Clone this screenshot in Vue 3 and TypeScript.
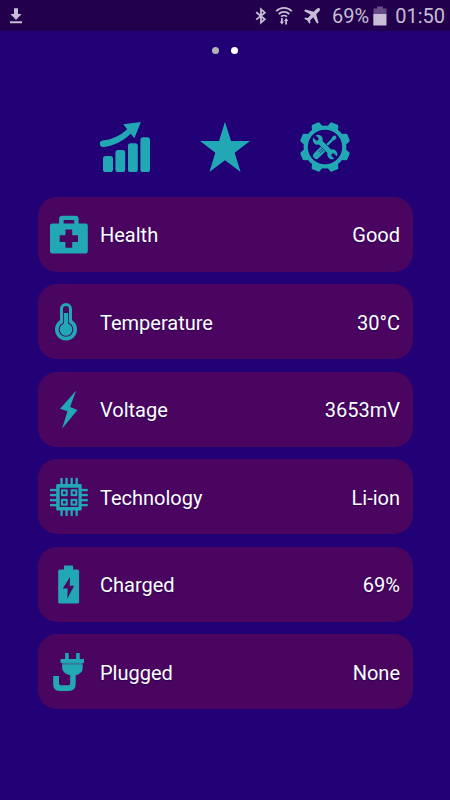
<script setup lang="ts">
interface Row {
  icon: 'health' | 'temperature' | 'voltage' | 'technology' | 'charged' | 'plugged'
  label: string
  value: string
}

const rows: Row[] = [
  { icon: 'health', label: 'Health', value: 'Good' },
  { icon: 'temperature', label: 'Temperature', value: '30°C' },
  { icon: 'voltage', label: 'Voltage', value: '3653mV' },
  { icon: 'technology', label: 'Technology', value: 'Li-ion' },
  { icon: 'charged', label: 'Charged', value: '69%' },
  { icon: 'plugged', label: 'Plugged', value: 'None' },
]

const toothAngles: number[] = [22.5, 67.5, 112.5, 157.5, 202.5, 247.5, 292.5, 337.5]
const pinOffsets: number[] = [10.4, 15.4, 20.5, 25.5]
const cells: [number, number][] = [[11, 11.4], [20.6, 11.4], [11, 20.9], [20.6, 20.9]]
</script>

<template>
  <div class="screen">
    <header class="status">
      <svg class="download" width="14" height="18" viewBox="0 0 14 18">
        <path d="M5 1.3h4v5.7h3.6L7 13 1.4 7H5zM1 14.3h12v2H1z" />
      </svg>
      <div class="tray">
        <svg class="bluetooth" width="12" height="18" viewBox="0 0 12 18">
          <path class="line" d="M1.2 5.2l8.6 7L6 15.6V2.2l3.8 3.4-8.6 7" />
        </svg>
        <svg class="wifi" width="18" height="20" viewBox="0 0 18 20">
          <path class="line" d="M1.2 5.1a11 11 0 0 1 15.6 0M3.7 8a7.5 7.5 0 0 1 10.600 0M6.100 10.700a4.200 4.200 0 0 1 5.800 0" />
          <path d="M6 12h1.800v3.400h1.300L6.900 18.600l-2.300-3.200H6zM10.200 18.600v-3.500H8.900l2.200-3.100 2.300 3.100H12v3.500z" />
        </svg>
        <svg class="plane" width="16" height="16" viewBox="0 0 16 16">
          <path d="M15.6.4c-.8-.8-2.200-.3-3.100.6L9.700 3.800 1.400 1.500 0 2.900l6.800 3.800-3 3.200-2.500-.3-1.100 1.100 3.200 1.900 1.900 3.200 1.100-1.100-.3-2.500 3.200-3 3.800 6.600 1.400-1.400-2.300-8.100 2.800-2.800c.9-.9 1.400-2.300.6-3.100z" />
        </svg>
        <span class="percent">69%</span>
        <svg class="cell" width="14" height="20" viewBox="0 0 14 20">
          <path class="dim" d="M4 .5h6v2h3.500V8H.5V2.500H4z" />
          <path d="M.3 8h13.200v11.500H.3z" />
        </svg>
        <span class="clock">01:50</span>
      </div>
    </header>

    <div class="pager">
      <i class="dot"></i>
      <i class="dot active"></i>
    </div>

    <nav class="tabs">
      <svg class="tab" viewBox="0 0 50 50">
        <rect x="3" y="34" width="10" height="16" rx="2.6" />
        <rect x="15.400" y="28" width="9.800" height="22" rx="2.600" />
        <rect x="28" y="21.300" width="9.800" height="28.700" rx="2.600" />
        <rect x="40.400" y="15.200" width="9.600" height="34.800" rx="2.600" />
        <path d="M2.600 18.500C11.500 17.700 20 13.800 27.200 7.200L23.300 2.200 40.800 0 34.400 16.200 30.800 11.700C23.500 18.600 13.500 24.200 3.700 25A3.270 3.270 0 0 1 2.600 18.500z" />
      </svg>
      <svg class="tab" viewBox="0 0 50 50">
        <path d="M25 -.3l6 19.300h19L34.700 30.700 40.600 50 25 38.300 9.400 50l5.900-19.300L0 19h19z" />
      </svg>
      <svg class="tab" viewBox="0 0 50 50">
        <circle class="ring" cx="25" cy="25" r="19.300" />
        <path
          v-for="angle in toothAngles"
          :key="angle"
          d="M18.800 6.200L20.700 .6Q21 -.4 22 -.4h6q1 0 1.300 1l1.900 5.600z"
          :transform="`rotate(${angle} 25 25)`"
        />
        <g transform="rotate(45 25 25)">
          <path d="M23.700 9.800h2.600l.7 2.800-.8 2v8h-2.400v-8l-.8-2zM21.700 28.300q0-1.800 1.600-1.800h3.400q1.600 0 1.600 1.800v8.900a3.300 3.300 0 0 1-6.600 0z" />
          <path class="groove" d="M24 28v5M26 28v5" />
        </g>
        <g transform="rotate(-45 25 25)">
          <path
            class="wrench"
            d="M23.300 10v4.400l1.700 1 1.700-1V10a5 5 0 0 1 .9 9v12a5 5 0 0 1-.9 9v-4.400l-1.700-1-1.700 1V40a5 5 0 0 1-.9-9V19a5 5 0 0 1 .9-9z"
          />
        </g>
      </svg>
    </nav>

    <main class="list">
      <section v-for="row in rows" :key="row.label" class="card">
        <svg class="icon" viewBox="0 0 37.5 37.5">
          <g v-if="row.icon === 'health'">
            <path
              fill-rule="evenodd"
              d="M9.100 7.500V3Q9.100 -.3 12.400 -.3H25.300Q28.600 -.3 28.600 3V7.500H35.500Q37.800 7.500 37.800 9.800V35.200Q37.800 37.500 35.500 37.500H2.300Q0 37.500 0 35.200V9.800Q0 7.500 2.300 7.500zM13.600 7.500H24.300V4.800Q24.300 4 23.500 4H14.400Q13.600 4 13.600 4.800zM15.400 13.500V19.200H9.700V26H15.400V31.700H22.200V26H28V19.200H22.200V13.500z"
            />
          </g>
          <g v-else-if="row.icon === 'temperature'">
            <path d="M10 17.200V6a6 6 0 0 1 12 0V17.200A11 11 0 1 1 10 17.200z" />
            <path class="cut" d="M13 19.700V6a3 3 0 0 1 6 0V19.700A7.400 7.400 0 1 1 13 19.700z" />
            <circle cx="16" cy="26.500" r="6.300" />
            <path d="M13.800 9.900h4.400v13h-4.400z" />
          </g>
          <path
            v-else-if="row.icon === 'voltage'"
            d="M26.200 -.5L10 17.700 17.500 20.200 12 37.700 27.500 19 20.100 15.900z"
          />
          <g v-else-if="row.icon === 'technology'">
            <path
              fill-rule="evenodd"
              d="M7.500 6H30.500Q31.700 6 31.700 7.200V31.300Q31.700 32.500 30.500 32.500H7.500Q6.200 32.500 6.200 31.300V7.200Q6.200 6 7.500 6zM9.700 9.700V28.900H28.500V9.700z"
            />
            <g v-for="offset in pinOffsets" :key="offset">
              <rect :x="offset" y="-.1" width="2.300" height="7" />
              <rect :x="offset" y="31" width="2.300" height="6.900" />
              <rect x="0" :y="offset + .5" width="7" height="2.300" />
              <rect x="31" :y="offset + .5" width="6.800" height="2.300" />
            </g>
            <rect
              v-for="([x, y], index) in cells"
              :key="index"
              class="core"
              :x="x + 1"
              :y="y + 1"
              width="4.700"
              height="4.700"
            />
          </g>
          <path
            v-else-if="row.icon === 'charged'"
            fill-rule="evenodd"
            d="M14 3.400V.3Q14 -.4 14.700 -.4H22.400Q23.100 -.4 23.100 .3V3.400H27.500Q29.100 3.400 29.100 5V36Q29.100 37.600 27.500 37.600H9.800Q8.200 37.600 8.200 36V5Q8.200 3.400 9.800 3.400zM20 11L12.800 22.400H17.700L17.300 32.400 24.200 19.700H19.700z"
          />
          <g v-else>
            <path d="M15.200 -.1h3.500v6.300h-3.500zM26.200 -.1h3.500v6.300h-3.500zM10.500 6.100h23.500v3.800H10.500z" />
            <path class="seam" d="M12.100 9.900h20.600v1.300H12.100z" />
            <path d="M12.100 11.200H32.700V14.500Q32.700 19 29 21Q27.500 22 25.700 22.200V31Q25.700 37.900 18.800 37.900H9.500Q3.200 37.900 3.200 31.500V23H9V30.200Q9 32.300 11.100 32.300H18.200Q20.200 32.300 20.200 30.200V22.200Q17.500 22 15.600 20.600Q12.100 18.200 12.100 14.500z" />
          </g>
        </svg>
        <span class="label">{{ row.label }}</span>
        <span class="value">{{ row.value }}</span>
      </section>
    </main>
  </div>
</template>

<style>
body {
  background: #220075;
}
</style>

<style scoped>
.screen {
  box-sizing: border-box;
  width: 450px;
  height: 800px;
  overflow: hidden;
  background: #220075;
  color: #fff;
  font-family: Roboto, "Liberation Sans", sans-serif;
}

svg {
  display: block;
  flex: none;
  overflow: visible;
}

.status {
  display: flex;
  justify-content: space-between;
  box-sizing: border-box;
  height: 31px;
  padding: 0 5px 0 9px;
  background: #22004c;
  color: #c7bdd4;
  fill: #c7bdd4;
}

.download {
  margin-top: 7px;
}

.tray {
  display: flex;
  height: 31px;
  align-items: center;
}

.line {
  fill: none;
  stroke: #c7bdd4;
  stroke-width: 1.8;
}

.bluetooth {
  margin-right: 8px;
}

.wifi {
  margin-right: 11px;
}

.plane {
  margin-right: 12px;
}

.percent,
.clock {
  font-size: 20px;
  line-height: 31px;
  padding-top: 2px;
}

.percent {
  margin-right: 4px;
}

.cell {
  margin-right: 8px;
}

.dim {
  fill: #664c86;
}

.pager {
  display: flex;
  justify-content: center;
  gap: 12px;
  padding-top: 15.500px;
}

.dot {
  width: 7px;
  height: 7px;
  border-radius: 50%;
  background: #b5b2b5;
}

.dot.active {
  background: #fff;
}

.tabs {
  display: flex;
  justify-content: center;
  gap: 50px;
  margin-top: 68.500px;
  fill: #22a7b5;
}

.tab {
  width: 50px;
  height: 50px;
}

.ring {
  fill: none;
  stroke: #22a7b5;
  stroke-width: 4.200;
}

.groove {
  stroke: #220075;
  stroke-width: .6;
}

.wrench {
  stroke: #220075;
  stroke-width: .8;
  paint-order: stroke;
}

.list {
  display: flex;
  flex-direction: column;
  gap: 12.500px;
  margin: 24.900px 37.500px 0;
}

.card {
  display: flex;
  align-items: center;
  box-sizing: border-box;
  height: 75px;
  padding: 0 12.500px;
  border-radius: 19px;
  background: #4a0560;
}

.icon {
  width: 37.500px;
  height: 37.500px;
  fill: #22a7b5;
}

.cut {
  fill: #4a0560;
}

.core {
  fill: none;
  stroke: #22a7b5;
  stroke-width: 2.100;
}

.seam {
  fill: #327d9b;
}

.label,
.value {
  padding-top: 2px;
  font-size: 20px;
  line-height: 24px;
  text-shadow: 0 1px 1px rgba(15, 0, 70, .6);
}

.label {
  margin-left: 12.500px;
}

.value {
  margin-left: auto;
}
</style>
